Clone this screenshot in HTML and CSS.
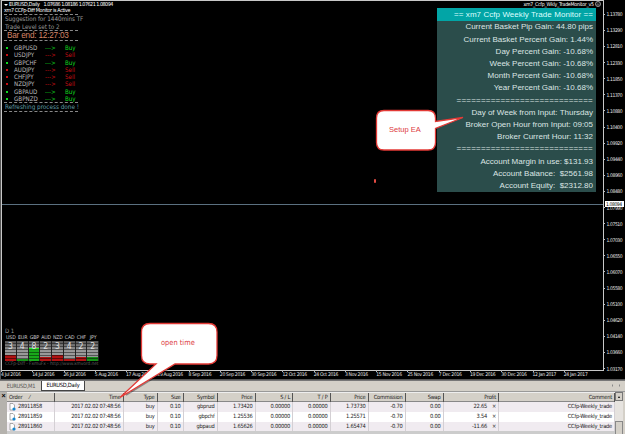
FILE: index.html
```html
<!DOCTYPE html>
<html lang="en">
<head>
  <meta charset="UTF-8" />
  <title>EURUSD,Daily</title>
  <link rel="stylesheet" href="styles.css">
</head>
<body>
<div class="window">
  <div class="chart">
    <div class="main">
      <div class="plot">
        <div class="status">
          <p class="title"><i class="arrow"></i><span>EURUSD,Daily</span><span class="ohlc">1.07686 1.08186 1.07621 1.08094</span></p>
          <p class="active">xm7 CCFp-Diff Monitor is Active</p>
          <div class="tips">
            <p class="grey">Suggestion for 1440mins TF</p>
            <p class="grey level">Trade Level set to 2</p>
          </div>
          <p class="bar-end">Bar end: 12:27:03</p>
          <div class="signals" id="signals"></div>
          <p class="refresh">Refreshing process done !</p>
        </div>
        <div class="right">
          <p class="expert">xm7_Ccfp_Wkly_TradeMonitor_v5 <svg width="6" height="6" viewBox="0 0 6 6"><circle cx="3" cy="3" r="2.5" fill="none" stroke="#ddd" stroke-width=".7"/><path d="M1.6 3.4Q3 5 4.4 3.4M2 2.2h.6M3.6 2.2h.6" fill="none" stroke="#ddd" stroke-width=".6"/></svg></p>
          <div class="monitor">
            <h1>== xm7 Ccfp Weekly Trade Monitor ==</h1>
            <p>Current Basket Pip Gain: 44.80 pips</p>
            <p>Current Basket Percent Gain: 1.44%</p>
            <p>Day Percent Gain: -10.68%</p>
            <p>Week Percent Gain: -10.68%</p>
            <p>Month Percent Gain: -10.68%</p>
            <p>Year Percent Gain: -10.68%</p>
            <p class="sep">============================</p>
            <p>Day of Week from Input: Thursday</p>
            <p>Broker Open Hour from Input: 09:05</p>
            <p>Broker Current Hour: 11:32</p>
            <p class="sep">============================</p>
            <p>Account Margin in use: $131.93</p>
            <p>Account Balance:&nbsp; $2561.98</p>
            <p>Account Equity:&nbsp; $2312.80</p>
          </div>
        </div>
        <div class="strength">
          <p class="period">D 1</p>
          <div class="meters" id="meters"></div>
          <p class="credit">CCFp-Diff - FxmuFx - http://www.xmvord.net</p>
        </div>
        <i class="price-line"></i>
        <i class="mark"></i>
      </div>
      <div class="scale" id="scale"></div>
    </div>
    <div class="dates" id="dates"></div>
  </div>
  <div class="tabs"><span class="tab">EURUSD,M1</span><span class="tab on">EURUSD,Daily</span><span class="nav"><i></i><i class="next"></i></span></div>
  <div class="terminal">
    <div class="side">×</div>
    <div class="table" id="table"></div>
    <div class="scroll"><span><i></i></span><b></b></div>
  </div>

  <svg class="callout" width="625" height="434" viewBox="0 0 625 434">
    <g fill="none" stroke="#000" stroke-opacity=".35" stroke-width="2">
      <path d="M143 365H210Q219 365 219 356V332"/>
      <path d="M173 366L126 395"/>
    </g>
    <path d="M150 323.500H208.500Q217 323.500 217 332V355.500Q217 364 208.500 364H175L120 397.500L156 364H150Q141.500 364 141.500 355.500V332Q141.500 323.500 150 323.500Z" fill="#fff" stroke="#e33a36" stroke-width="1.300"/>
    <path d="M384 110.500H428Q435.500 110.500 435.500 118V121.500L463 117.500L435.500 128.500V142.500Q435.500 150 428 150H384Q376.500 150 376.500 142.500V118Q376.500 110.500 384 110.500Z" fill="#fff" stroke="#e33a36" stroke-width="1.300"/>
  </svg>
  <span class="note setup">Setup EA</span>
  <span class="note open">open time</span>
</div>
<script src="app.js"></script>
</body>
</html>
```
FILE: styles.css
```css
* { box-sizing: border-box; }
body { margin: 0; font-family: "DejaVu Sans Condensed", "DejaVu Sans", sans-serif; font-stretch: condensed; }
p, h1 { margin: 0; font-weight: normal; white-space: pre; }
i { font-style: normal; }
.window { position: relative; width: 625px; height: 434px; overflow: hidden; background: #d4d0c8; display: flex; flex-direction: column; }

.chart { height: 380px; background: #000; border-left: 1px solid #555; border-bottom: 1px solid #555; display: flex; flex-direction: column; }
.main { display: flex; height: 371px; }
.plot { position: relative; width: 603px; flex: none; border: 1px solid #c8c8c8; display: flex; justify-content: space-between; }
.status { width: 130px; padding-left: 2px; color: #fff; }
.title { display: flex; gap: 4px; height: 6px; font-size: 5.4px; line-height: 7px; letter-spacing: -.3px; }
.title .arrow { width: 4px; margin: 2.5px -3px 0 0; height: 0; border: 2px solid transparent; border-top: 2.5px solid #fff; }
.title .ohlc { letter-spacing: -.5px; }
.active { width: 74px; height: 7px; font-size: 5.4px; line-height: 7px; letter-spacing: -.35px; }
.tips, .bar-end, .signals, .refresh { width: 74px; border-bottom: 1px dashed #888; }
.tips { height: 17px; border-top: 1px dashed #888; }
.grey { color: #999; font-size: 6.3px; line-height: 7.5px; padding-left: 1px; letter-spacing: -.05px; }
.bar-end { height: 10px; padding-left: 3px; color: #d58566; font-family: "Liberation Sans", Arial, sans-serif; font-size: 8.2px; line-height: 10px; font-stretch: normal; letter-spacing: -.2px; }
.signals { height: 62px; padding: 3px 0 0 2px; }
.signal { display: grid; grid-template-columns: 8px 31px 20px 20px; height: 7.3px; font-size: 6.2px; line-height: 7px; color: #bbb; }
.signal i { width: 2px; height: 2px; margin-top: 3px; background: currentColor; }
.signal .sell { color: #c80f14; }
.signal .buy { color: #0fd81f; }
.refresh { height: 9px; color: #5f9ca4; font-size: 6.4px; line-height: 8px; padding-left: 1px; letter-spacing: -.03px; }

.right { width: 166px; display: flex; flex-direction: column; align-items: flex-end; padding-right: 6px; }
.expert { height: 7px; color: #fff; font-size: 5.2px; line-height: 7px; letter-spacing: -.25px; display: flex; margin-right: -4px; }
.monitor { width: 159px; height: 184px; margin-right: 1px; padding-right: 3px; background: #2b4d4b; color: #dce5e4; text-align: right; font: 8px/12.2px "Liberation Sans", Arial, sans-serif; }
.monitor h1 { height: 13px; margin: 0 -3px .3px 0; padding-right: 3px; font-size: 8px; line-height: 14px; letter-spacing: .06px; background: #02a5a6; color: #dff; }
.monitor p { height: 12.22px; }
.monitor .sep { letter-spacing: .2px; }

.strength { position: absolute; left: 3px; top: 326px; width: 96px; color: #999; }
.period { font-size: 6px; line-height: 7px; }
.meters { display: flex; width: 94px; }
.meter { flex: 1; text-align: center; font-size: 5.2px; line-height: 7px; letter-spacing: -.1px; color: #ccc; }
.gauge { position: relative; height: 20px; border-right: 1px solid #222; display: flex; flex-direction: column; justify-content: flex-end; background: linear-gradient(#555, #999 50%, #999); font-size: 8.5px; line-height: 10px; }
.gauge::after { content: ""; position: absolute; inset: 0; background: repeating-linear-gradient(transparent 0 2px, rgba(0, 0, 0, .45) 2px 3px); }
.gauge span { position: absolute; z-index: 1; left: 0; right: 0; top: 0; color: #e0e0e0; }
.gauge .strong { border-top: 2px solid #2df52d; }
.credit { font-size: 4.8px; line-height: 6px; letter-spacing: -.05px; color: #5c5c5c; }
.price-line { position: absolute; left: 0; right: 0; top: 203px; height: 1px; background: #5b7080; }
.mark { position: absolute; left: 372px; top: 178px; width: 2px; height: 4px; border-radius: 1px; background: #e34b43; }

.scale { flex: 1; padding-top: 6.2px; position: relative; color: #e4e4e4; font-size: 5px; line-height: 16.11px; letter-spacing: -.4px; }
.scale p { display: flex; align-items: center; gap: 1.5px; height: 16.11px; }
.scale p::before { content: ""; width: 1px; height: 1px; background: #bbb; }
.scale .now { position: absolute; left: 1px; top: 201px; width: 19px; height: 6px; padding-left: 1px; background: #fff; color: #000; line-height: 6px; }
.scale .now::before { display: none; }
.dates { display: flex; height: 8px; color: #e4e4e4; font-size: 5px; line-height: 6.5px; letter-spacing: -.3px; }
.dates p { width: 31.28px; flex: none; position: relative; }
.dates p::before { content: ""; position: absolute; left: 0; top: -1px; width: 1px; height: 2px; background: #bbb; }

.tabs { display: flex; height: 12px; padding-left: 1px; border-top: 1px solid #777; border-bottom: 1px solid #999; font-size: 5.7px; line-height: 10px; letter-spacing: -.25px; }
.tab { width: 40px; text-align: center; color: #555; }
.tab.on { width: 44px; background: #fff; color: #000; border: 1px solid #444; border-top: 0; line-height: 9px; }
.nav { margin-left: auto; display: flex; gap: 6px; padding: 3px 4px 0 0; }
.nav i { border: 1.5px solid transparent; border-right-color: #888; height: 3px; }
.nav .next { border-right-color: transparent; border-left-color: #888; }

.terminal { display: flex; height: 42px; }
.side { width: 7px; background: #b5b2ad; font: bold 7px/8px "Liberation Sans", sans-serif; text-align: center; }
.table { width: 608px; background: #ccc; }
.row { display: grid; grid-template-columns: 48px 68.5px 34px 26px 34px 38px 37.5px 37.5px 38px 37px 38px 55.5px 116px; height: 9.7px; background: #f0ebf0; color: #222; text-align: right; font-size: 5.7px; line-height: 9.7px; letter-spacing: -.25px; white-space: pre; }
.row:nth-child(3) { background: #fff; }
.row span { padding-right: 2px; border-right: 1px solid #d4d0d4; }
.row span:first-child { display: flex; gap: 2px; padding-left: 2px; }
.row svg { flex: none; margin-top: 1px; }
.row .profit { padding-right: 2px; }
.profit i { margin-left: 5px; }
.row.head { height: 10.3px; background: #d4d0c8; border-top: 1px solid #eee; border-bottom: 1px solid #888; line-height: 9.3px; }
.head span { border-right-color: #555; }
.scroll { width: 8px; background: #e6e3df; }
.scroll span { display: flex; height: 9px; align-items: center; justify-content: center; background: #d4d0c8; border: 1px solid #777; }
.scroll i { border: 1.5px solid transparent; border-top: 0; border-bottom: 2px solid #000; }
.scroll b { display: block; height: 14px; margin-top: 20px; background: #d4d0c8; border: 1px solid #888; }

.callout { position: absolute; left: 0; top: 0; }
.note { position: absolute; color: #dd3c42; font-size: 7.4px; line-height: 10px; }
.setup { left: 389px; top: 125px; font: 7.5px/10px "Liberation Sans", Arial, sans-serif; }
.open { left: 161px; top: 338px; }
```
FILE: app.js
```javascript
const signals = [["GBPUSD", 1], ["USDJPY", 0], ["GBPCHF", 1], ["AUDJPY", 0], ["CHFJPY", 0], ["NZDJPY", 0], ["GBPAUD", 1], ["GBPNZD", 1]];
document.getElementById("signals").innerHTML = signals.map(([pair, up]) => {
  const c = up ? "buy" : "sell";
  return `<div class="signal"><i class="${c}"></i><span>${pair}</span><span class="${c}">---&gt;</span><span class="${c}">${up ? "Buy" : "Sell"}</span></div>`;
}).join("");

const red = "#b01212", green = "#149016";
const meters = [["USD", 3, 6, red], ["EUR", 4, 2, green], ["GBP", 8, 13, "#18a81a"], ["AUD", 2, 4, red], ["NZD", 3, 6, red], ["CAD", 4, 2, red], ["CHF", 2, 4, red], ["JPY", 2, 4, green]];
document.getElementById("meters").innerHTML = meters.map(([name, value, h, color]) =>
  `<div class="meter">${name}<div class="gauge"><span>${value}</span><b class="${h > 10 ? "strong" : ""}" style="height:${h}px;background-color:${color}"></b></div></div>`
).join("");

const prices = ["1.13780", "1.13290", "1.12810", "1.12330", "1.11850", "1.11370", "1.10880", "1.10400", "1.09920", "1.09440", "1.08960", "1.08480", "1.07990", "1.07510", "1.07030", "1.06550", "1.06070", "1.05580", "1.05100", "1.04620", "1.04140", "1.03660", "1.03170"];
document.getElementById("scale").innerHTML = prices.map(p => `<p>${p}</p>`).join("") + '<p class="now">1.08094</p>';

const dates = ["4 Jul 2016", "14 Jul 2016", "26 Jul 2016", "5 Aug 2016", "17 Aug 2016", "29 Aug 2016", "8 Sep 2016", "20 Sep 2016", "30 Sep 2016", "12 Oct 2016", "24 Oct 2016", "3 Nov 2016", "15 Nov 2016", "25 Nov 2016", "7 Dec 2016", "19 Dec 2016", "30 Dec 2016", "12 Jan 2017", "24 Jan 2017"];
document.getElementById("dates").innerHTML = dates.map(d => `<p>${d}</p>`).join("");

const icon = '<svg width="7" height="8" viewBox="0 0 7 8"><path d="M1 .5h3l1.500 1.500v5H1z" fill="#fff" stroke="#777" stroke-width=".6"/><circle cx="5" cy="6" r="1.600" fill="#1687cf"/></svg>';
const rows = [
  ["28911858", "2017.02.02 07:48:56", "buy", "0.10", "gbpnzd", "1.73420", "0.00000", "0.00000", "1.73730", "-0.70", "0.00", "22.65", "CCfp-Weekly_trade"],
  ["28911859", "2017.02.02 07:48:56", "buy", "0.10", "gbpchf", "1.25536", "0.00000", "0.00000", "1.25571", "-0.70", "0.00", "3.54", "CCfp-Weekly_trade"],
  ["28911860", "2017.02.02 07:48:56", "buy", "0.10", "gbpaud", "1.65626", "0.00000", "0.00000", "1.65474", "-0.70", "0.00", "-11.66", "CCfp-Weekly_trade"]
];
const head = ["Order     ⁄", "Time", "Type", "Size", "Symbol", "Price", "S / L", "T / P", "Price", "Commission", "Swap", "Profit", "Comment"];
document.getElementById("table").innerHTML =
  `<div class="row head">${head.map(h => `<span>${h}</span>`).join("")}</div>` +
  rows.map(r => `<div class="row">${r.map((c, i) =>
    i === 0 ? `<span>${icon}${c}</span>` : i === 11 ? `<span class="profit">${c}<i>×</i></span>` : `<span>${c}</span>`
  ).join("")}</div>`).join("");
```
